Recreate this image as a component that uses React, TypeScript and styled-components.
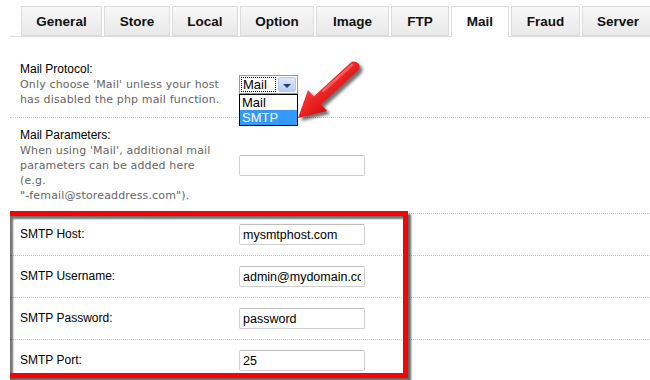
import React from "react";
import styled, { createGlobalStyle } from "styled-components";

const Global = createGlobalStyle`
  html, body { margin: 0; padding: 0; background: #fff; overflow: hidden; }
  body { font-family: "Liberation Sans", Arial, sans-serif; color: #000; }
`;

const Page = styled.div`
  width: 640px;
  margin-left: 10px;
  overflow: hidden;
`;

const TabBar = styled.div`
  display: flex;
  gap: 2px;
  padding: 6px 0 0 11px;
  border-bottom: 1px solid #dcdcdc;
  height: 30px;
`;

const Tab = styled.div<{ $w: number; $active?: boolean }>`
  box-sizing: border-box;
  flex: none;
  width: ${(p) => p.$w}px;
  height: ${(p) => (p.$active ? 31 : 30)}px;
  border: 1px solid #dcdcdc;
  border-bottom: ${(p) => (p.$active ? "none" : "1px solid #dcdcdc")};
  background: ${(p) => (p.$active ? "#fff" : "linear-gradient(#f8f8f8, #e9e9e9)")};
  display: flex;
  align-items: center;
  justify-content: center;
  padding-bottom: ${(p) => (p.$active ? 1 : 0)}px;
  font-weight: bold;
  font-size: 13.5px;
  color: #111;
`;

const Form = styled.div`
  margin-top: 15px;
`;

const Row = styled.div`
  display: grid;
  grid-template-columns: 219px 1fr;
  align-items: center;
  border-bottom: 1px dotted #c4c4c4;
`;

const LabelCell = styled.div`
  padding: 10px;
  font-size: 12px;
  line-height: 15px;
  white-space: nowrap;
`;

const Help = styled.span`
  display: block;
  font-family: "DejaVu Sans", Verdana, sans-serif;
  font-size: 11px;
  line-height: 15px;
  letter-spacing: 0.15px;
  color: #666;
`;

const ValueCell = styled.div`
  padding: 10px;
`;

const SelectWrap = styled.div`
  position: relative;
  width: 59px;
`;

const SelectBox = styled.div`
  box-sizing: border-box;
  width: 59px;
  height: 19px;
  border: 1px solid #7f9db9;
  display: flex;
  align-items: stretch;
  background: #fff;
`;

const SelectValue = styled.div`
  flex: 1;
  margin: 1px;
  border: 1px dotted #000;
  font-size: 13px;
  line-height: 13px;
  padding-left: 1px;
  display: flex;
  align-items: center;
`;

const SelectButton = styled.div`
  width: 16px;
  margin: 1px;
  border: 1px solid #b5c8f0;
  border-radius: 2px;
  background: linear-gradient(#dde8fe, #b9cdf8);
  display: flex;
  align-items: center;
  justify-content: center;
  &::after {
    content: "";
    border-left: 4px solid transparent;
    border-right: 4px solid transparent;
    border-top: 4px solid #2c3c5c;
    margin-top: 2px;
  }
`;

const DropList = styled.div`
  position: absolute;
  top: 19px;
  left: 0;
  box-sizing: border-box;
  width: 59px;
  border: 1px solid #000;
  background: #fff;
  z-index: 2;
`;

const Option = styled.div<{ $selected?: boolean }>`
  height: 15px;
  line-height: 15px;
  font-size: 13px;
  padding-left: 2px;
  background: ${(p) => (p.$selected ? "#3399ff" : "#fff")};
  color: ${(p) => (p.$selected ? "#fff" : "#000")};
`;

const ArrowSvg = styled.svg`
  position: absolute;
  left: 51px;
  top: -16px;
  z-index: 3;
  overflow: visible;
`;

const TextInput = styled.input`
  box-sizing: border-box;
  width: 126px;
  height: 21px;
  border: 1px solid #cfcfcf;
  border-top-color: #bdbdbd;
  border-radius: 2px;
  padding: 0 3px;
  font-family: "Liberation Sans", Arial, sans-serif;
  font-size: 12.5px;
  color: #000;
  background: #fff;
  outline: none;
  display: block;
`;

const SmtpGroup = styled.div`
  position: relative;
`;

const Highlight = styled.div`
  position: absolute;
  left: -5px;
  top: -3px;
  width: 403px;
  height: 167px;
  box-sizing: border-box;
  border: 5px solid #f00;
  box-shadow: 3px 3px 2px rgba(0, 0, 0, 0.6), inset 3px 3px 2px rgba(0, 0, 0, 0.55);
  pointer-events: none;
`;

const tabs: { label: string; w: number; active?: boolean }[] = [
  { label: "General", w: 81 },
  { label: "Store", w: 66 },
  { label: "Local", w: 66 },
  { label: "Option", w: 74 },
  { label: "Image", w: 73 },
  { label: "FTP", w: 58 },
  { label: "Mail", w: 58, active: true },
  { label: "Fraud", w: 69 },
  { label: "Server", w: 72 },
];

const smtpRows = [
  { label: "SMTP Host:", value: "mysmtphost.com" },
  { label: "SMTP Username:", value: "admin@mydomain.com" },
  { label: "SMTP Password:", value: "password" },
  { label: "SMTP Port:", value: "25" },
];

function RedArrow() {
  // tip (8,59), tail (64,8)
  return (
    <ArrowSvg width="80" height="70" viewBox="0 0 80 70">
      <defs>
        <linearGradient id="rg" x1="0" y1="0" x2="1" y2="1">
          <stop offset="0" stopColor="#ff4545" />
          <stop offset="1" stopColor="#d40000" />
        </linearGradient>
        <filter id="blur" x="-30%" y="-30%" width="160%" height="160%">
          <feGaussianBlur stdDeviation="1.6" />
        </filter>
      </defs>
      <g transform="translate(3,3)" filter="url(#blur)" opacity="0.55">
        <line x1="64" y1="8" x2="29" y2="40" stroke="#000" strokeWidth="11" strokeLinecap="round" />
        <polygon points="8,59 37,52 18,31" fill="#000" />
      </g>
      <line x1="64" y1="8" x2="29" y2="40" stroke="url(#rg)" strokeWidth="11" strokeLinecap="round" />
      <polygon points="8,59 37,52 18,31" fill="url(#rg)" />
      <line x1="62" y1="6" x2="33" y2="32" stroke="#ff8a8a" strokeWidth="2.5" strokeLinecap="round" opacity="0.55" />
    </ArrowSvg>
  );
}

export default function App() {
  return (
    <>
      <Global />
      <Page>
        <TabBar>
          {tabs.map((t) => (
            <Tab key={t.label} $w={t.w} $active={t.active}>
              {t.label}
            </Tab>
          ))}
        </TabBar>
        <Form>
          <Row>
            <LabelCell>
              Mail Protocol:
              <Help>
                Only choose 'Mail' unless your host
                <br />
                has disabled the php mail function.
              </Help>
            </LabelCell>
            <ValueCell>
              <SelectWrap>
                <SelectBox>
                  <SelectValue>Mail</SelectValue>
                  <SelectButton />
                </SelectBox>
                <DropList>
                  <Option>Mail</Option>
                  <Option $selected>SMTP</Option>
                </DropList>
                <RedArrow />
              </SelectWrap>
            </ValueCell>
          </Row>
          <Row>
            <LabelCell>
              Mail Parameters:
              <Help>
                When using 'Mail', additional mail
                <br />
                parameters can be added here
                <br />
                (e.g.
                <br />
                "-femail@storeaddress.com").
              </Help>
            </LabelCell>
            <ValueCell>
              <TextInput defaultValue="" readOnly />
            </ValueCell>
          </Row>
          <SmtpGroup>
            {smtpRows.map((r) => (
              <Row key={r.label}>
                <LabelCell>{r.label}</LabelCell>
                <ValueCell>
                  <TextInput defaultValue={r.value} readOnly />
                </ValueCell>
              </Row>
            ))}
            <Highlight />
          </SmtpGroup>
        </Form>
      </Page>
    </>
  );
}
